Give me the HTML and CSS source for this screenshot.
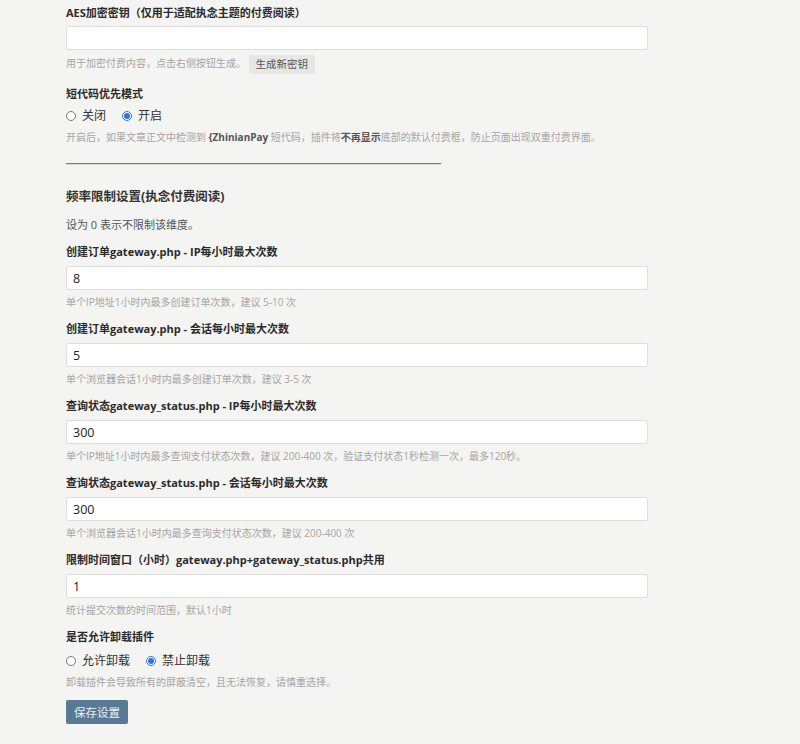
FILE: index.html
```
<!DOCTYPE html>
<html lang="zh-CN">
<head>
  <meta charset="UTF-8" />
  <meta name="viewport" content="width=device-width, initial-scale=1.0"/>
  <title>付费阅读设置</title>
  <link rel="stylesheet" href="styles.css">
</head>
<body>
  <form class="settings">
    <div class="field first">
      <label class="field-label">AES加密密钥（仅用于适配执念主题的付费阅读）</label>
      <input type="text" class="text-input" value="">
      <p class="desc">用于加密付费内容，点击右侧按钮生成。 <button type="button" class="gen-btn">生成新密钥</button></p>
    </div>

    <div class="field radio-field short">
      <label class="field-label">短代码优先模式</label>
      <div class="radios">
        <label><input type="radio" name="shortcode"> 关闭</label>
        <label><input type="radio" name="shortcode" checked> 开启</label>
      </div>
      <p class="desc">开启后，如果文章正文中检测到 <b>{ZhinianPay</b> 短代码，插件将<b>不再显示</b>底部的默认付费框，防止页面出现双重付费界面。</p>
    </div>

    <hr class="divider">

    <h3 class="section-title">频率限制设置(执念付费阅读)</h3>
    <p class="intro">设为 0 表示不限制该维度。</p>

    <div class="field">
      <label class="field-label">创建订单gateway.php - IP每小时最大次数</label>
      <input type="text" class="text-input" value="8">
      <p class="desc">单个IP地址1小时内最多创建订单次数，建议 5-10 次</p>
    </div>

    <div class="field">
      <label class="field-label">创建订单gateway.php - 会话每小时最大次数</label>
      <input type="text" class="text-input" value="5">
      <p class="desc">单个浏览器会话1小时内最多创建订单次数，建议 3-5 次</p>
    </div>

    <div class="field">
      <label class="field-label">查询状态gateway_status.php - IP每小时最大次数</label>
      <input type="text" class="text-input" value="300">
      <p class="desc">单个IP地址1小时内最多查询支付状态次数，建议 200-400 次，验证支付状态1秒检测一次，最多120秒。</p>
    </div>

    <div class="field">
      <label class="field-label">查询状态gateway_status.php - 会话每小时最大次数</label>
      <input type="text" class="text-input" value="300">
      <p class="desc">单个浏览器会话1小时内最多查询支付状态次数，建议 200-400 次</p>
    </div>

    <div class="field">
      <label class="field-label">限制时间窗口（小时）gateway.php+gateway_status.php共用</label>
      <input type="text" class="text-input" value="1">
      <p class="desc">统计提交次数的时间范围，默认1小时</p>
    </div>

    <div class="field radio-field">
      <label class="field-label">是否允许卸载插件</label>
      <div class="radios">
        <label><input type="radio" name="uninstall"> 允许卸载</label>
        <label><input type="radio" name="uninstall" checked> 禁止卸载</label>
      </div>
      <p class="desc">卸载插件会导致所有的屏蔽清空，且无法恢复，请慎重选择。</p>
    </div>

    <button type="button" class="save-btn">保存设置</button>
  </form>
</body>
</html>
```

FILE: styles.css
```
body {
  margin: 0;
  background: #f4f4f2;
  font-family: "Open Sans", "Noto Sans CJK SC", sans-serif;
  color: #2b2b2b;
}
.settings {
  padding: 5px 0 20px 66px;
  width: 582px;
}
.field {
  margin-top: 11px;
}
.field.first {
  margin-top: 0;
}
.field.short {
  margin-top: 12px;
}
.field-label {
  display: block;
  font-size: 11px;
  font-weight: bold;
  line-height: 16px;
  color: #2b2b2b;
}
.text-input {
  display: block;
  box-sizing: border-box;
  width: 582px;
  height: 24px;
  margin: 6px 0 0;
  padding: 0 6px;
  border: 1px solid #dedede;
  border-radius: 2px;
  background: #fff;
  font-family: inherit;
  font-size: 12.5px;
  color: #222;
}
.first .text-input {
  margin-top: 5px;
}
.desc {
  margin: 4px 0 0;
  font-size: 10px;
  line-height: 16px;
  color: #a5a5a5;
  white-space: nowrap;
}
.desc b {
  color: #555;
}
.first .desc {
  margin-top: 5px;
}
.gen-btn {
  border: none;
  border-radius: 2px;
  background: #e6e6e4;
  color: #555;
  font-family: inherit;
  font-size: 10.5px;
  line-height: 19px;
  padding: 0 7px;
  vertical-align: middle;
}
.radios {
  display: flex;
  gap: 16px;
  margin-top: 6px;
  font-size: 12px;
  line-height: 16px;
  color: #333;
}
.radios label {
  display: flex;
  align-items: center;
  gap: 6px;
}
.radios input {
  margin: 0;
  width: 10px;
  height: 10px;
  accent-color: #2f72e0;
}
.radio-field .desc {
  margin-top: 5px;
}
.radio-field:not(.short) .radios {
  margin-top: 8px;
}
.divider {
  width: 375px;
  margin: 18px 0 0;
  border: none;
  border-top: 1px solid #7c7c7c;
  border-bottom: 1px solid #d8d8d8;
}
.section-title {
  margin: 22px 0 0;
  font-size: 12.5px;
  line-height: 20px;
  font-weight: bold;
  color: #333;
}
.intro {
  margin: 10px 0 0;
  font-size: 11px;
  line-height: 16px;
  color: #555;
}
.intro + .field {
  margin-top: 11px;
}
.save-btn {
  display: block;
  margin-top: 10px;
  height: 24px;
  padding: 0 8px;
  border: none;
  border-radius: 2px;
  background: #587a94;
  color: #eaf0f4;
  font-family: inherit;
  font-size: 11.5px;
}
```
